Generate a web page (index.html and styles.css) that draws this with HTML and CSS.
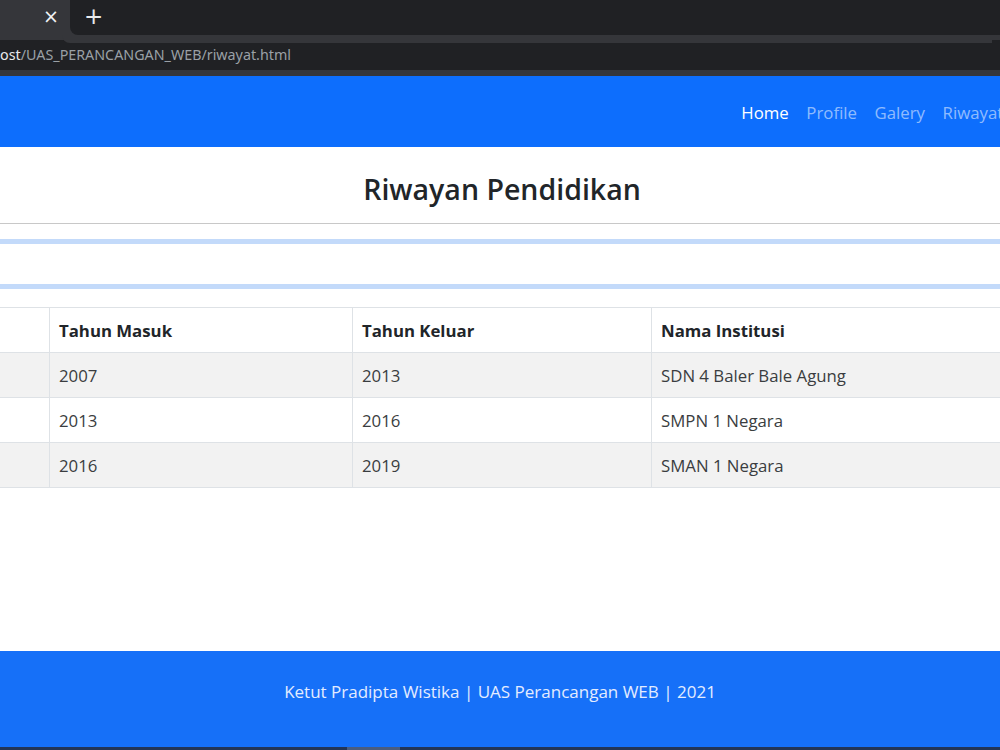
FILE: index.html
```html
<!DOCTYPE html>
<html lang="id">
<head>
  <meta charset="UTF-8">
  <title>Riwayat Pendidikan</title>
  <link rel="stylesheet" href="styles.css">
</head>
<body>

  <div class="chrome">
    <div class="tabstrip">
      <div class="tab">
        <span class="tab-close">&times;</span>
      </div>
      <div class="tab-rest">
        <span class="tab-new">+</span>
      </div>
    </div>
    <div class="toolbar">
      <div class="omnibox"><span class="host">ost</span>/UAS_PERANCANGAN_WEB/riwayat.html</div>
    </div>
  </div>

  <nav class="navbar">
    <ul class="nav-links">
      <li><a href="#" class="active">Home</a></li>
      <li><a href="#">Profile</a></li>
      <li><a href="#">Galery</a></li>
      <li><a href="#">Riwayat</a></li>
    </ul>
  </nav>

  <main class="content">
    <div class="page-title">
      <h2>Riwayan Pendidikan</h2>
    </div>

    <div class="band"></div>

    <div class="table-wrap">
      <table class="riwayat">
        <thead>
          <tr>
            <th class="col-no"></th>
            <th class="col-masuk">Tahun Masuk</th>
            <th class="col-keluar">Tahun Keluar</th>
            <th>Nama Institusi</th>
          </tr>
        </thead>
        <tbody>
          <tr>
            <td></td>
            <td>2007</td>
            <td>2013</td>
            <td>SDN 4 Baler Bale Agung</td>
          </tr>
          <tr>
            <td></td>
            <td>2013</td>
            <td>2016</td>
            <td>SMPN 1 Negara</td>
          </tr>
          <tr>
            <td></td>
            <td>2016</td>
            <td>2019</td>
            <td>SMAN 1 Negara</td>
          </tr>
        </tbody>
      </table>
    </div>
  </main>

  <footer class="footer">
    <p>Ketut Pradipta Wistika | UAS Perancangan WEB | 2021</p>
  </footer>
  <div class="taskbar"><span class="taskbar-item"></span></div>

</body>
</html>
```

FILE: styles.css
```css
html, body {
  margin: 0;
  padding: 0;
}

body {
  width: 1000px;
  height: 750px;
  overflow: hidden;
  display: flex;
  flex-direction: column;
  font-family: "Open Sans", "Noto Sans", sans-serif;
  background: white;
  color: #212529;
}

/* browser chrome */
.chrome {
  background: #202124;
}

.tabstrip {
  height: 35px;
  display: flex;
}

.tab {
  width: 70px;
  background: #35363a;
  display: flex;
  align-items: center;
  justify-content: flex-end;
  padding-right: 11px;
  box-sizing: border-box;
}

.tab-close {
  color: #f1f3f4;
  font-family: "DejaVu Sans", sans-serif;
  font-size: 19px;
  line-height: 1;
  margin-top: -2px;
}

.tab-rest {
  flex: 1;
  background: #202124;
  border-bottom-left-radius: 8px;
  display: flex;
  align-items: center;
  padding-left: 14px;
  box-shadow: -8px 8px 0 #35363a;
}

.tab-new {
  color: #e8eaed;
  font-family: "DejaVu Sans", sans-serif;
  font-size: 23px;
  line-height: 1;
  margin-top: -2px;
}

.toolbar {
  background: #35363a;
  padding: 5px 0 6px;
}

.omnibox {
  background: #202124;
  height: 30px;
  line-height: 30px;
  font-family: "Noto Sans", sans-serif;
  font-size: 14.3px;
  color: #9aa0a6;
  white-space: nowrap;
}

.omnibox .host {
  color: #e8eaed;
}

/* navbar */
.navbar {
  background: #0d6efd;
  height: 71px;
  display: flex;
  justify-content: flex-end;
  align-items: center;
}

.nav-links {
  list-style: none;
  margin: 2px -12px 0 0;
  padding: 0;
  display: flex;
}

.nav-links a {
  display: block;
  padding: 0 8.8px;
  font-size: 16.8px;
  text-decoration: none;
  color: rgba(255,255,255,0.55);
}

.nav-links a.active {
  color: white;
}

/* content */
.content {
  flex: 1;
}

.page-title {
  border-bottom: 1px solid #c8c8c8;
  height: 76px;
  display: flex;
  align-items: center;
  justify-content: center;
}

.page-title h2 {
  margin: 0;
  font-size: 28.5px;
  font-weight: 600;
  padding-top: 8px;
  padding-left: 4px;
}

.band {
  margin-top: 15px;
  height: 40px;
  border-top: 5px solid #c3dafa;
  border-bottom: 5px solid #c3dafa;
}

.table-wrap {
  margin-top: 18px;
  overflow: hidden;
}

.riwayat {
  border-collapse: collapse;
  margin-left: -60px;
  width: 1200px;
  table-layout: fixed;
  font-size: 16.8px;
}

.riwayat th,
.riwayat td {
  border: 1px solid #dee2e6;
  padding: 0 9px;
  height: 44px;
  text-align: left;
}

.riwayat th {
  font-weight: bold;
}

.riwayat .col-no {
  width: 90px;
}

.riwayat .col-masuk {
  width: 284px;
}

.riwayat .col-keluar {
  width: 280px;
}

.riwayat td {
  color: #3a3d40;
}

.riwayat tbody tr:nth-child(odd) {
  background: #f2f2f2;
}

/* footer */
.footer {
  background: #1670f8;
  height: 96px;
  display: flex;
  justify-content: center;
  align-items: flex-start;
}

.footer p {
  margin: 0;
  padding-top: 29px;
  color: #e3ecff;
  font-size: 17px;
}

.taskbar {
  height: 3px;
  background: #233556;
}

.taskbar-item {
  display: block;
  margin-left: 347px;
  width: 53px;
  height: 3px;
  background: #4a5d80;
}
```
